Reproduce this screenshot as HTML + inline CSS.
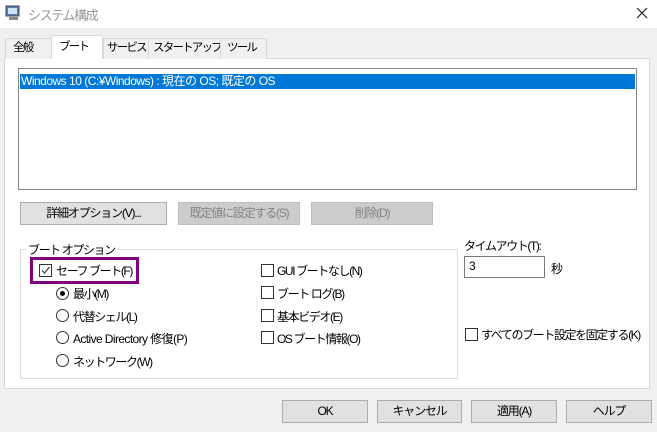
<!DOCTYPE html><html><head><meta charset="utf-8"><style>
*{box-sizing:border-box;margin:0;padding:0}
body{width:657px;height:432px;background:#f0f0f0;font-family:"Liberation Sans","Noto Sans CJK JP",sans-serif;font-size:12px;color:#000;position:relative;overflow:hidden}
.a{position:absolute;white-space:nowrap}
.j{letter-spacing:-1.4px}
.btn{position:absolute;background:#e1e1e1;border:1px solid #adadad;text-align:center;line-height:21px;white-space:nowrap;letter-spacing:-1.2px}
.dis{background:#ccc;border-color:#bfbfbf;color:#838383}
.cb{position:absolute;width:13px;height:13px;border:1px solid #333;background:#fff}
.rb{position:absolute;width:13px;height:13px;border:1px solid #333;border-radius:50%;background:#fff}
.tab{position:absolute;top:38px;height:21px;border:1px solid #d9d9d9;border-bottom:none;background:#f0f0f0;line-height:19px;padding-left:5px;white-space:nowrap;letter-spacing:-1.8px;font-size:11.5px;overflow:hidden}
</style></head><body>
<div class="a" style="left:0;top:0;width:657px;height:28px;background:#fff"></div>
<svg class="a" style="left:5px;top:5px" width="16" height="16"><rect x="1" y="1" width="13" height="10" fill="#5a7fb5" stroke="#445"/><rect x="3" y="3" width="9" height="6" fill="#cfe3f7"/><rect x="4" y="12" width="9" height="3" fill="#888"/></svg>
<div class="a j" style="left:28px;top:5px;color:#999;font-size:13px">システム構成</div>
<svg class="a" style="left:636px;top:7px" width="12" height="12"><path d="M1 1L11 11M11 1L1 11" stroke="#222" stroke-width="1.2"/></svg>
<div class="a" style="left:4px;top:58px;width:646px;height:331px;background:#fff;border:1px solid #d9d9d9"></div>
<div class="tab" style="left:5px;width:47px;padding-left:7px">全般</div>
<div class="tab" style="left:51px;top:35px;height:24px;width:52px;background:#fff;line-height:22px;padding-left:7px">ブート</div>
<div class="tab" style="left:103px;width:46px;padding-left:3px">サービス</div>
<div class="tab" style="left:148px;width:73px;padding-left:4px">スタートアップ</div>
<div class="tab" style="left:220px;width:47px;padding-left:6px">ツール</div>
<div class="a" style="left:18px;top:68px;width:619px;height:122px;border:1px solid #828790;background:#fff"></div>
<div class="a" style="left:20px;top:74px;width:615px;height:15px;background:#0078d7;color:#fff;line-height:15px;padding-left:1px;letter-spacing:-0.5px">Windows 10 (C:¥Windows) : 現在の OS; 既定の OS</div>
<div class="btn" style="left:20px;top:202px;width:147px;height:23px">詳細オプション(V)...</div>
<div class="btn dis" style="left:178px;top:202px;width:122px;height:23px">既定値に設定する(S)</div>
<div class="btn dis" style="left:311px;top:202px;width:122px;height:23px">削除(D)</div>
<div class="a" style="left:20px;top:249px;width:438px;height:130px;border:1px solid #dcdcdc"></div>
<div class="a j" style="left:26px;top:241px;background:#fff;padding:0 2px">ブート オプション</div>
<div class="a" style="left:30px;top:257px;width:109px;height:27px;border:3px solid #800080"></div>
<div class="cb" style="left:39px;top:264px"></div>
<svg class="a" style="left:39px;top:264px" width="13" height="13"><path d="M3 6.5L5.5 9L10.5 3" fill="none" stroke="#333" stroke-width="1.1"/></svg>
<div class="a j" style="left:56px;top:262px">セーフ ブート(F)</div>
<div class="rb" style="left:56px;top:287px"></div><div class="a" style="left:60px;top:291px;width:5px;height:5px;border-radius:50%;background:#000"></div>
<div class="a j" style="left:73px;top:285px">最小(M)</div>
<div class="rb" style="left:56px;top:309px"></div><div class="a j" style="left:73px;top:308px">代替シェル(L)</div>
<div class="rb" style="left:56px;top:331px"></div><div class="a" style="left:73px;top:330px;letter-spacing:-0.6px">Active Directory 修復(P)</div>
<div class="rb" style="left:56px;top:354px"></div><div class="a j" style="left:73px;top:353px">ネットワーク(W)</div>
<div class="cb" style="left:261px;top:264px"></div><div class="a j" style="left:277px;top:262px">GUI ブートなし(N)</div>
<div class="cb" style="left:261px;top:286px"></div><div class="a j" style="left:277px;top:285px">ブート ログ(B)</div>
<div class="cb" style="left:261px;top:309px"></div><div class="a j" style="left:277px;top:308px">基本ビデオ(E)</div>
<div class="cb" style="left:261px;top:331px"></div><div class="a j" style="left:277px;top:330px">OS ブート情報(O)</div>
<div class="a j" style="left:464px;top:237px">タイムアウト(T):</div>
<div class="a" style="left:464px;top:256px;width:81px;height:22px;border:1px solid #7a7a7a;background:#fff;padding:2px 4px">3</div>
<div class="a" style="left:551px;top:260px">秒</div>
<div class="cb" style="left:465px;top:328px"></div><div class="a j" style="left:481px;top:326px">すべてのブート設定を固定する(K)</div>
<div class="btn" style="left:282px;top:400px;width:86px;height:23px">OK</div>
<div class="btn" style="left:377px;top:400px;width:85px;height:23px">キャンセル</div>
<div class="btn" style="left:471px;top:400px;width:86px;height:23px">適用(A)</div>
<div class="btn" style="left:566px;top:400px;width:86px;height:23px">ヘルプ</div>
</body></html>
